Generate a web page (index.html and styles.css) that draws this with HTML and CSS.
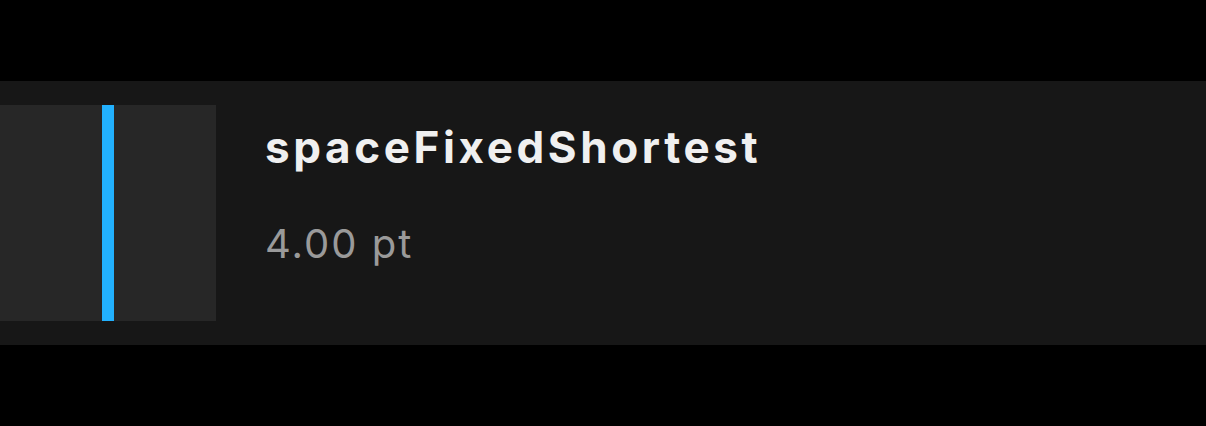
FILE: index.html
```html
<!DOCTYPE html>
<html>
<head><meta charset="utf-8"><link rel="stylesheet" href="styles.css"></head>
<body>
<div class="page">
  <div class="card">
    <div class="swatch"><div class="bar"></div></div>
    <div class="info">
      <div class="name">spaceFixedShortest</div>
      <div class="value">4.00 pt</div>
    </div>
  </div>
</div>
</body>
</html>
```
FILE: styles.css
```css
html, body { margin: 0; padding: 0; background: #000; }
body { width: 1206px; height: 426px; overflow: hidden; font-family: Inter, "Noto Sans", sans-serif; }
.page { padding-top: 81px; }
.card { height: 264px; background: #171717; display: flex; align-items: center; }
.swatch { width: 216px; height: 216px; background: #272727; display: flex; justify-content: center; }
.bar { width: 12px; height: 100%; background: #22b1fe; }
.info { align-self: flex-start; margin-top: 42px; margin-left: 49px; display: flex; flex-direction: column; gap: 49px; }
.name { color: #f0f0f0; font-size: 44px; font-weight: 700; letter-spacing: 3.6px; line-height: 48px; }
.value { color: #9a9a9a; font-size: 40px; font-weight: 400; letter-spacing: 2px; line-height: 48px; }
```
